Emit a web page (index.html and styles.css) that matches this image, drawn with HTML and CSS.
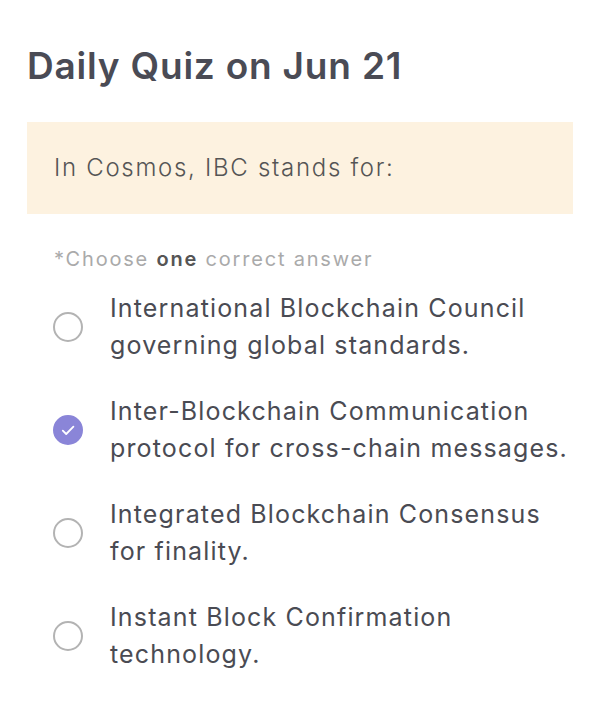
FILE: index.html
```html
<!DOCTYPE html>
<html lang="en">
<head>
  <meta charset="UTF-8" />
  <meta name="viewport" content="width=device-width, initial-scale=1.0"/>
  <title>Daily Quiz</title>
  <link rel="stylesheet" href="styles.css">
</head>
<body>
  <div class="quiz">
    <h1>Daily Quiz on Jun 21</h1>

    <div class="question">In Cosmos, IBC stands for:</div>

    <p class="hint">*Choose <b>one</b> correct answer</p>

    <ul class="options">
      <li class="option">
        <span class="radio"></span>
        <span class="label">International Blockchain Council governing global standards.</span>
      </li>
      <li class="option selected">
        <span class="radio">
          <svg viewBox="0 0 28 28" width="28" height="28"><path d="M8.8 14.6l3.4 3.4L19.4 10.6" fill="none" stroke="#fff" stroke-width="1.8" stroke-linecap="round" stroke-linejoin="round"/></svg>
        </span>
        <span class="label">Inter-Blockchain Communication protocol for cross-chain messages.</span>
      </li>
      <li class="option">
        <span class="radio"></span>
        <span class="label">Integrated Blockchain Consensus for finality.</span>
      </li>
      <li class="option">
        <span class="radio"></span>
        <span class="label">Instant Block Confirmation technology.</span>
      </li>
    </ul>
  </div>
</body>
</html>
```

FILE: styles.css
```css
body {
  margin: 0;
  font-family: Inter, "Noto Sans", sans-serif;
  background-color: #fff;
  color: #4a4b53;
}

.quiz {
  padding: 40px 27px 20px;
}

h1 {
  margin: 0 0 30px;
  font-size: 37px;
  font-weight: 600;
  line-height: 52px;
  color: #4a4b55;
  letter-spacing: 0.8px;
}

.question {
  background-color: #fdf2e0;
  padding: 29px 27px;
  font-size: 24px;
  font-weight: 300;
  line-height: 34px;
  color: #555;
  letter-spacing: 1.7px;
}

.hint {
  margin: 30px 0 16px 27px;
  font-size: 20px;
  line-height: 30px;
  color: #aaa;
  letter-spacing: 1.8px;
}

.hint b {
  color: #555;
  font-weight: 600;
}

.options {
  list-style: none;
  margin: 0;
  padding: 0;
}

.option {
  display: flex;
  align-items: center;
  gap: 27px;
  padding-left: 26px;
  margin-bottom: 29px;
}

.radio {
  flex: none;
  width: 26px;
  height: 26px;
  border: 2px solid #b3b3b3;
  border-radius: 50%;
  display: flex;
  align-items: center;
  justify-content: center;
}

.option.selected .radio {
  border-color: #8a85d8;
  background-color: #8a85d8;
}

.radio svg {
  display: block;
  flex: none;
}

.label {
  font-size: 25px;
  line-height: 37px;
  color: #4a4b53;
  max-width: 462px;
  letter-spacing: 1.15px;
}
```
